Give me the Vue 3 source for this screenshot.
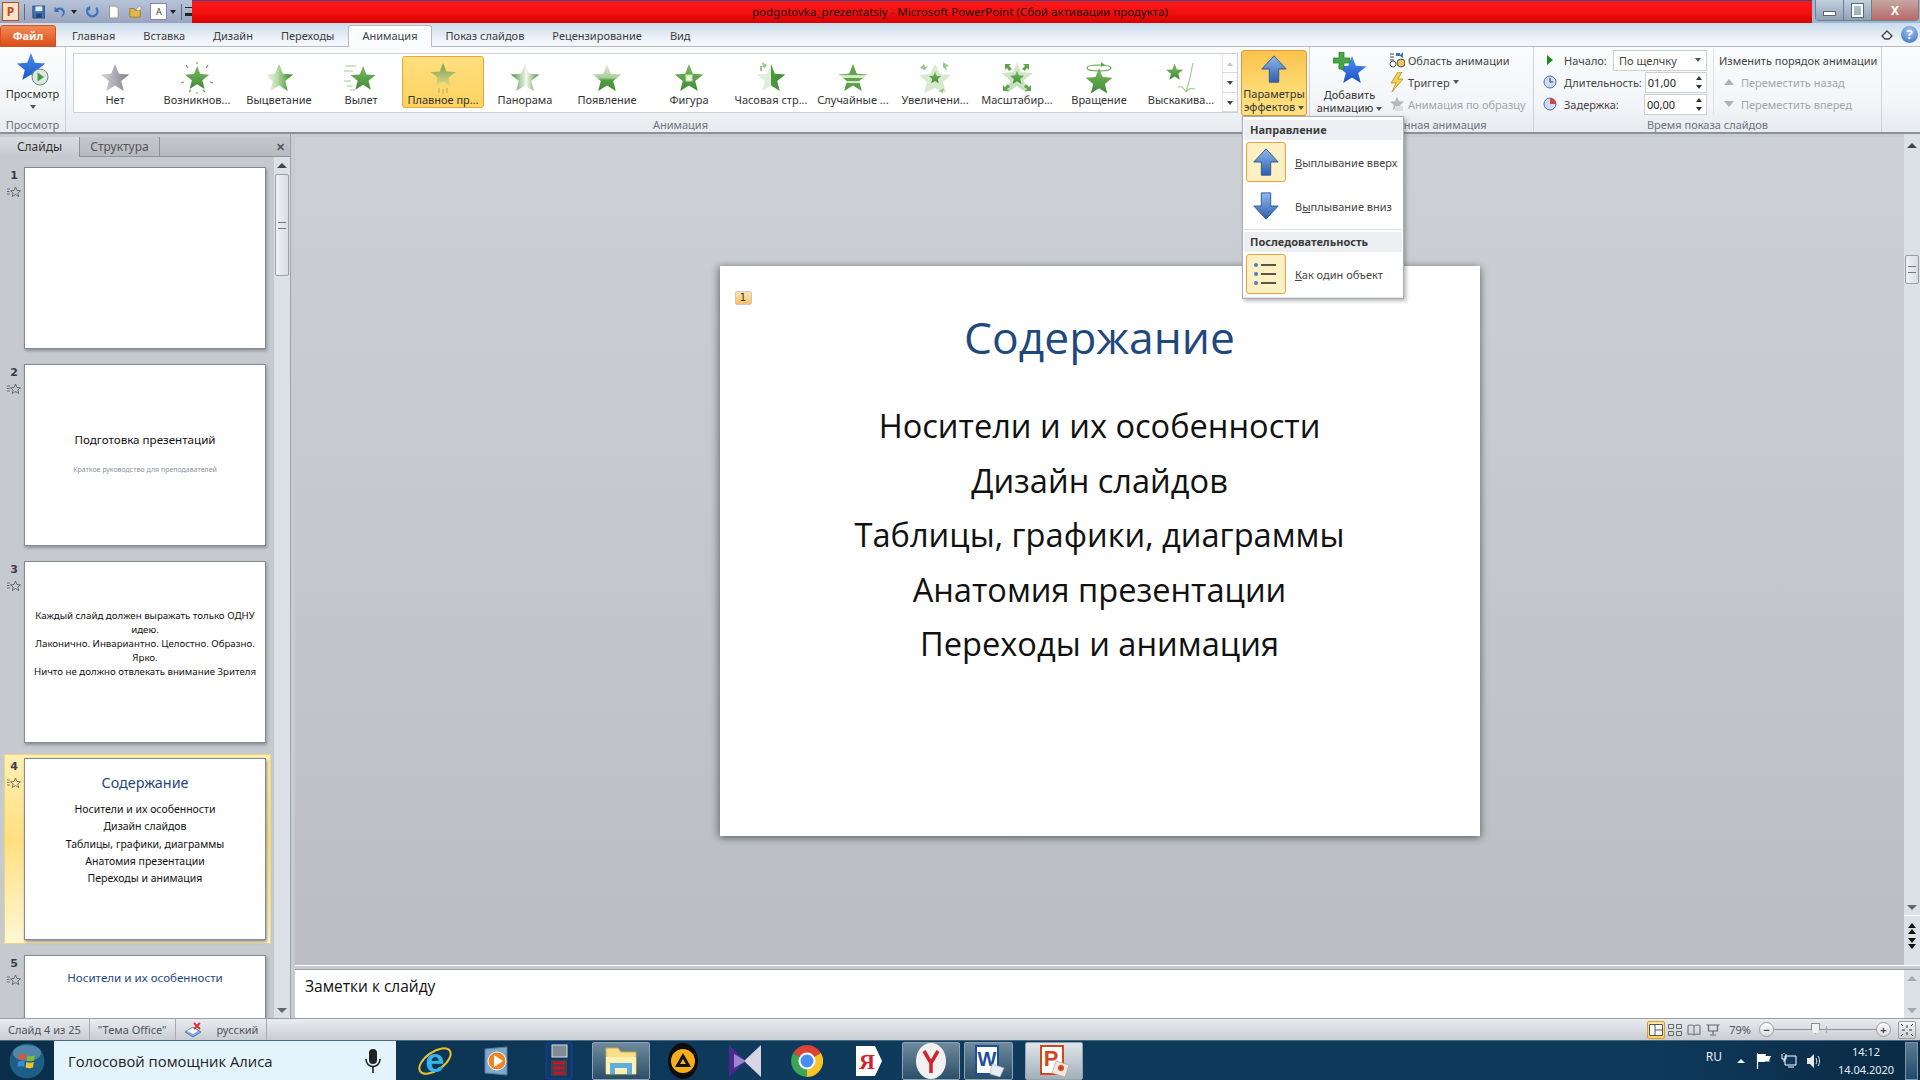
<template>
  <div class="window">
    <svg class="defs" width="0" height="0">
      <defs>
        <linearGradient id="g-gray" x1="0" y1="0" x2="1" y2="0"><stop offset="0" stop-color="#d6d6da" /><stop offset="1" stop-color="#7f7f8c" /></linearGradient>
        <linearGradient id="g-green" x1="0" y1="0" x2="0" y2="1"><stop offset="0" stop-color="#7cbc63" /><stop offset="1" stop-color="#3f8a35" /></linearGradient>
        <linearGradient id="g-fade" x1="0" y1="0" x2="1" y2="0"><stop offset="0" stop-color="#fbfdf9" /><stop offset=".45" stop-color="#b5d8a6" /><stop offset=".8" stop-color="#58a346" /><stop offset="1" stop-color="#4c9440" /></linearGradient>
        <linearGradient id="g-float" x1="0" y1="0" x2="0" y2="1"><stop offset="0" stop-color="#70a050" /><stop offset="1" stop-color="#e6dc8a" /></linearGradient>
        <linearGradient id="g-pan" x1="0" y1="0" x2="1" y2="0"><stop offset="0" stop-color="#448f38" /><stop offset=".55" stop-color="#f4f8f0" /><stop offset="1" stop-color="#448f38" /></linearGradient>
        <linearGradient id="g-appear" x1="0" y1="0" x2="0" y2="1"><stop offset="0" stop-color="#e4f0dc" /><stop offset=".5" stop-color="#a9cf98" /><stop offset=".6" stop-color="#529c44" /><stop offset="1" stop-color="#3f8a35" /></linearGradient>
        <linearGradient id="g-clock" x1="0" y1="0" x2="1" y2="0"><stop offset="0" stop-color="#dfeeda" /><stop offset=".5" stop-color="#dfeeda" /><stop offset=".5" stop-color="#4e983f" /><stop offset="1" stop-color="#3f8a35" /></linearGradient>
        <linearGradient id="g-stripe" x1="0" y1="0" x2="0" y2="1"><stop offset="0" stop-color="#5da54b" /><stop offset=".4" stop-color="#5da54b" /><stop offset=".42" stop-color="#d3e8c9" /><stop offset=".5" stop-color="#d3e8c9" /><stop offset=".52" stop-color="#5da54b" /><stop offset=".62" stop-color="#5da54b" /><stop offset=".64" stop-color="#d3e8c9" /><stop offset=".7" stop-color="#d3e8c9" /><stop offset=".72" stop-color="#5da54b" /><stop offset="1" stop-color="#4b9540" /></linearGradient>
        <linearGradient id="g-pale" x1="0" y1="0" x2="0" y2="1"><stop offset="0" stop-color="#dcebd4" /><stop offset="1" stop-color="#c2dcb6" /></linearGradient>
        <linearGradient id="g-blue" x1="0" y1="0" x2="0" y2="1"><stop offset="0" stop-color="#8fb9ea" /><stop offset="1" stop-color="#2f5fae" /></linearGradient>
        <linearGradient id="g-star" x1="0" y1="0" x2="0" y2="1"><stop offset="0" stop-color="#4c8df0" /><stop offset="1" stop-color="#1b56c4" /></linearGradient>
        <path id="star" d="M16 1L19.8 10.7 30.3 11.4 22.2 18 24.8 28.1 16 22.5 7.2 28.1 9.8 18 1.7 11.4 12.2 10.7Z" />
        <path id="arrow-up" d="M16 2L29 16H21V30H11V16H3Z" />
        <path id="arrow-down" d="M16 30L29 16H21V2H11V16H3Z" />
        <g id="mini-star" fill="none" stroke="#555" stroke-width=".8">
          <path d="M8.5 1L10 4.5 13.5 4.8 10.8 7 11.8 10.5 8.5 8.6 5.2 10.5 6.2 7 3.5 4.8 7 4.5Z" />
          <path d="M0 3H3M0 5.5H2.5M0 8H3" />
        </g>
      </defs>
    </svg>

    <header class="titlebar">
      <div class="quick">
        <span class="app-logo">P</span>
        <span class="quick-sep"></span>
        <svg class="qa first" viewBox="0 0 16 16"><path d="M1 1H15V15H1Z" fill="#3f6fb5" stroke="#27477f" /><path d="M4 1.5H12V7H4Z" fill="#e8eef6" /><path d="M5 10H11V15H5Z" fill="#24406f" /></svg>
        <svg class="qa" viewBox="0 0 16 16"><path d="M3 2V8H9L6.8 5.8C9 4.5 12 5.6 12.6 8.2 13 10.500 11.800 12.500 10 14 13.500 13 15.500 10 14.800 7 13.800 3 9 1.300 5.300 3.800Z" fill="#3b73c4" /></svg>
        <span class="qa-drop"></span>
        <svg class="qa redo" viewBox="0 0 16 16"><path d="M13 3A6 6 0 1 1 4 3" fill="none" stroke="#3b73c4" stroke-width="2.600" /><path d="M6 0V6H1Z" fill="#3b73c4" /></svg>
        <svg class="qa" viewBox="0 0 16 16"><path d="M3 1H10L13 4V15H3Z" fill="#fdfdf8" stroke="#8a8a80" /></svg>
        <svg class="qa" viewBox="0 0 16 16"><path d="M1 4H6L7 6H13V14H1Z" fill="#e5b84e" stroke="#9a7420" /><path d="M8 5L12 1 15 3 11 7Z" fill="#f3f0dc" stroke="#777" stroke-width=".6" /></svg>
        <span class="qa-a">A</span>
        <span class="qa-drop"></span>
        <span class="quick-sep"></span>
        <span class="qa-more"></span>
      </div>
      <div class="title-red">podgotovka_prezentatsiy - Microsoft PowerPoint (Сбой активации продукта)</div>
      <div class="winbtns">
        <span class="winbtn"><i class="w-min"></i></span>
        <span class="winbtn"><i class="w-max"></i></span>
        <span class="winbtn close">X</span>
      </div>
    </header>

    <nav class="tabs">
      <span class="tab-file">Файл</span>
      <span
        v-for="t in tabs"
        :key="t"
        class="tab"
        :class="{ current: t === 'Анимация' }"
      >{{ t }}</span>
      <span class="tab-tools">
        <svg width="12" height="10" viewBox="0 0 12 10"><path d="M1 6L6 1 11 6 8 9H4Z" fill="none" stroke="#444" stroke-width="1.300" /></svg>
        <span class="help">?</span>
      </span>
    </nav>

    <section class="ribbon">
      <div class="group g-preview">
        <div class="group-body preview-btn">
          <svg width="36" height="36" viewBox="0 0 36 36"><use href="#star" fill="url(#g-star)" /><circle cx="25" cy="25" r="8" fill="#dfe7e4" stroke="#6f8b80" /><path d="M22.500 20.500L29 25 22.500 29.500Z" fill="#3ba33b" /></svg>
          <span>Просмотр</span>
          <i class="caret"></i>
        </div>
        <div class="group-label">Просмотр</div>
      </div>

      <div class="group g-anim">
        <div class="group-body anim-body">
          <div class="gallery">
            <div
              v-for="e in effects"
              :key="e.label"
              class="effect"
              :class="{ selected: e.selected }"
            >
              <svg width="34" height="32" viewBox="0 0 34 32">
                <path v-for="(x, i) in e.under || []" :key="'u' + i" :d="x.d" :fill="x.fill || 'none'" :stroke="x.stroke || 'none'" stroke-width="1.100" />
                <use href="#star" :fill="`url(#${e.fill})`" :transform="e.tf || 'translate(1 1)'" />
                <path v-for="(x, i) in e.extras || []" :key="i" :d="x.d" :fill="x.fill || 'none'" :stroke="x.stroke || 'none'" stroke-width="1.100" />
              </svg>
              <span>{{ e.label }}</span>
            </div>
            <div class="gallery-scroll">
              <i class="sc-up off"></i>
              <i class="sc-down"></i>
              <i class="sc-more"></i>
            </div>
          </div>
          <div class="effects-btn">
            <svg width="30" height="30" viewBox="0 0 32 32"><use href="#arrow-up" fill="url(#g-blue)" stroke="#2c5596" /></svg>
            <span>Параметры</span>
            <span>эффектов <i class="caret inline"></i></span>
          </div>
        </div>
        <div class="group-label anim-label">Анимация</div>
      </div>

      <div class="group g-adv">
        <div class="group-body adv-body">
          <div class="add-btn">
            <svg width="34" height="34" viewBox="0 0 34 34"><use href="#star" fill="url(#g-star)" transform="translate(3 3)" /><path d="M6 0H11V6H17V11H11V17H6V11H0V6H6Z" fill="#45a845" stroke="#2a7a2a" stroke-width=".7" /></svg>
            <span class="add-text">Добавить</span>
            <span>анимацию <i class="caret inline"></i></span>
          </div>
          <div class="rows">
            <div class="row">
              <svg width="16" height="16" viewBox="0 0 16 16"><path d="M1 2H5M1 5H5M1 8H5" stroke="#444" /><path d="M7 1H11V3L14 0V6L11 4H7Z" fill="#3b73c4" /><circle cx="12" cy="11" r="4" fill="#e6c75c" stroke="#555" /><circle cx="4" cy="12" r="3" fill="#fff" stroke="#555" /></svg>
              Область анимации
            </div>
            <div class="row">
              <svg width="16" height="20" viewBox="0 0 16 20"><path d="M9 0L2 11H7L3 20 14 7H9L13 0Z" fill="#f2d14a" stroke="#a68413" stroke-width=".7" /></svg>
              Триггер <i class="caret inline"></i>
            </div>
            <div class="row off">
              <svg width="16" height="18" viewBox="0 0 32 32"><use href="#star" fill="#b4b7bb" /><path d="M12 20H28V30H12Z" fill="#dcdee0" /></svg>
              Анимация по образцу
            </div>
          </div>
        </div>
        <div class="group-label">Расширенная анимация</div>
      </div>

      <div class="group g-time">
        <div class="group-body time-body">
          <div class="time-col">
            <div class="row">
              <svg class="time-ico" width="14" height="14" viewBox="0 0 14 14"><path d="M4 2L10 7 4 12Z" fill="#1b8a1b" /></svg>
              <span class="time-label">Начало:</span>
              <span class="select">По щелчку<i class="caret"></i></span>
            </div>
            <div class="row">
              <svg class="time-ico" width="14" height="14" viewBox="0 0 14 14"><circle cx="7" cy="7" r="6" fill="#cfdcf0" stroke="#4a6ea8" /><path d="M7 3V7H10" fill="none" stroke="#333" /></svg>
              <span class="time-label">Длительность:</span>
              <span class="spin">01,00<b><i></i><i></i></b></span>
            </div>
            <div class="row">
              <svg class="time-ico" width="14" height="14" viewBox="0 0 14 14"><circle cx="7" cy="7" r="6" fill="#cfdcf0" stroke="#4a6ea8" /><path d="M7 7V1A6 6 0 0 1 13 7Z" fill="#d8453f" /></svg>
              <span class="time-label">Задержка:</span>
              <span class="spin">00,00<b><i></i><i></i></b></span>
            </div>
          </div>
          <div class="order-col">
            <div class="row">Изменить порядок анимации</div>
            <div class="row off move"><i class="tri-up"></i>Переместить назад</div>
            <div class="row off move"><i class="tri-down"></i>Переместить вперед</div>
          </div>
        </div>
        <div class="group-label">Время показа слайдов</div>
      </div>
    </section>

    <main class="workspace">
      <aside class="panel">
        <div class="panel-tabs">
          <span class="ptab current">Слайды</span>
          <span class="ptab">Структура</span>
          <span class="pclose">✕</span>
        </div>
        <div class="panel-main">
          <div class="thumbs">
            <div
              v-for="s in slides"
              :key="s.n"
              class="thumb-row"
              :class="{ active: s.n === 4 }"
            >
              <div class="thumb-side">
                <b>{{ s.n }}</b>
                <svg width="14" height="11" viewBox="0 0 14 11"><use href="#mini-star" /></svg>
              </div>
              <div class="thumb" :class="s.kind">
                <div v-if="s.title" class="thumb-title">{{ s.title }}</div>
                <div v-if="s.sub" class="thumb-sub">{{ s.sub }}</div>
                <div v-for="l in s.lines" :key="l" class="thumb-line">{{ l }}</div>
              </div>
            </div>
          </div>
          <div class="vscroll">
            <i class="sc-tri up"></i>
            <span class="vthumb tall"><u></u></span>
            <span class="spacer"></span>
            <i class="sc-tri down"></i>
          </div>
        </div>
      </aside>

      <div class="editor">
        <div class="editor-top">
          <div class="canvas">
            <article class="slide">
              <span class="badge">1</span>
              <h1>Содержание</h1>
              <p v-for="l in contents" :key="l">{{ l }}</p>
            </article>
          </div>
          <div class="vscroll main-scroll">
            <i class="sc-tri up"></i>
            <span class="vthumb small"><u></u></span>
            <span class="spacer"></span>
            <i class="sc-tri down"></i>
            <div class="pager">
              <span class="dbl"><i></i><i></i></span>
              <span class="dbl rev"><i></i><i></i></span>
            </div>
          </div>
        </div>
        <div class="notes">
          <div class="notes-text">Заметки к слайду</div>
          <div class="notes-scroll">
            <i class="sc-tri up pale"></i>
            <i class="sc-tri down pale"></i>
          </div>
        </div>
      </div>
    </main>

    <footer class="status">
      <span class="st">Слайд 4 из 25</span>
      <span class="st">"Тема Office"</span>
      <span class="st lang">
        <svg width="18" height="16" viewBox="0 0 18 16"><path d="M1 10L9 5 17 10 9 15Z" fill="#7fa6dd" stroke="#35609f" stroke-width=".7" /><path d="M3 9L9 5.500 14 9 9 12Z" fill="#f6f6f2" /><path d="M10 1L16 7M16 1L10 7" stroke="#d8302a" stroke-width="1.800" /></svg>
        <span>русский</span>
      </span>
      <span class="st-spacer"></span>
      <span class="view active">
        <svg width="14" height="12" viewBox="0 0 14 12"><path d="M.5.5H13.500V11.500H.5ZM6 .5V11.500M6 6H13.500" fill="#fff" stroke="#555" /></svg>
      </span>
      <span class="view">
        <svg width="14" height="12" viewBox="0 0 14 12"><path d="M.5.5H5.500V4.500H.5ZM8.500.5H13.500V4.500H8.500ZM.5 7.500H5.500V11.500H.5ZM8.500 7.500H13.500V11.500H8.500Z" fill="none" stroke="#666" /></svg>
      </span>
      <span class="view">
        <svg width="14" height="12" viewBox="0 0 14 12"><path d="M7 2C5 .8 3 .8 1 1.500V10.500C3 9.800 5 9.800 7 11 9 9.800 11 9.800 13 10.500V1.500C11 .8 9 .8 7 2ZM7 2V11" fill="none" stroke="#666" /></svg>
      </span>
      <span class="view">
        <svg width="14" height="12" viewBox="0 0 14 12"><path d="M.5 1H13.500M2.500 1V7H11.500V1M7 7V10M4 11H10" fill="none" stroke="#666" stroke-width="1.200" /></svg>
      </span>
      <span class="zoom-val">79%</span>
      <span class="zoom-btn">−</span>
      <span class="slider"><i class="tick"></i><i class="knob"></i></span>
      <span class="zoom-btn">+</span>
      <span class="fit">
        <svg width="16" height="16" viewBox="0 0 16 16"><path d="M8 3V6M8 10V13M3 8H6M10 8H13M2 2L4 4M14 2L12 4M2 14L4 12M14 14L12 12" stroke="#333" /></svg>
      </span>
    </footer>

    <div class="taskbar">
      <div class="start">
        <svg width="38" height="38" viewBox="0 0 38 38">
          <circle cx="19" cy="19" r="18" fill="#1e5d86" stroke="#0b2c42" />
          <ellipse cx="19" cy="11" rx="14" ry="8" fill="#7fb2cc" opacity=".5" />
          <path d="M11 13C13 11.500 15.500 12 18 13L17 18C15 17 13 17 10.500 18Z" fill="#e6502c" />
          <path d="M19.500 13.500C22 14.500 24.500 14.500 27 13L26 18.500C24 19.500 21 19.500 18.800 18.500Z" fill="#7ebc3c" />
          <path d="M10.300 19.500C13 18.500 15 18.500 16.800 19.500L16 25C14 24 12 24 9.500 25Z" fill="#2f8fd8" />
          <path d="M18.300 20C21 21 23.500 21 25.800 20L25 25.500C23 26.500 20 26.500 17.500 25.500Z" fill="#f4c22c" />
        </svg>
      </div>
      <div class="alice">
        <span>Голосовой помощник Алиса</span>
        <svg width="16" height="24" viewBox="0 0 16 24"><rect x="4" y="0" width="8" height="15" rx="4" fill="#222" /><path d="M1 10C1 20 15 20 15 10" fill="none" stroke="#222" stroke-width="1.600" /><path d="M8 18V24" stroke="#222" stroke-width="1.600" /></svg>
      </div>
      <div class="apps">
        <span class="task">
          <svg width="40" height="38" viewBox="0 0 40 38"><ellipse cx="20" cy="19" rx="18" ry="9" transform="rotate(-35 20 19)" fill="none" stroke="#e9c02f" stroke-width="2" /><text x="20" y="30" text-anchor="middle" class="logo-e">e</text></svg>
        </span>
        <span class="task">
          <svg width="30" height="32" viewBox="0 0 30 32"><path d="M3 4L25 2V30L3 28Z" fill="#7fa9c8" stroke="#517b9b" /><circle cx="15" cy="16" r="9" fill="#f08324" stroke="#fff" /><path d="M12 10L21 16 12 22Z" fill="#fff" /></svg>
        </span>
        <span class="task">
          <svg width="28" height="38" viewBox="0 0 28 38"><rect x="1" y="1" width="26" height="36" rx="2" fill="#123a5c" stroke="#1b3fb0" /><rect x="7" y="3" width="15" height="12" fill="#7d8b96" stroke="#ddd" /><rect x="6" y="18" width="16" height="16" fill="#39464f" /><path d="M8 21H20M8 26H20M8 31H20" stroke="#c2162a" stroke-width="3" /></svg>
        </span>
        <span class="task tile">
          <svg width="36" height="36" viewBox="0 0 36 36"><path d="M3 5H15L18 9H33V31H3Z" fill="#f6df88" stroke="#c8a84a" /><path d="M3 14H33V31H3Z" fill="#fdf0b4" /><path d="M7 31V20H29V31H24V25H12V31Z" fill="#5faee0" /></svg>
        </span>
        <span class="task">
          <svg width="32" height="38" viewBox="0 0 32 38"><ellipse cx="16" cy="19" rx="15" ry="18" fill="#0d0d0d" /><circle cx="16" cy="19" r="12" fill="#f6ae1c" /><path d="M16 11L24 25H8Z" fill="#111" /><path d="M16 17L19 22H13Z" fill="#f6ae1c" /></svg>
        </span>
        <span class="task">
          <svg width="34" height="38" viewBox="0 0 34 38"><path d="M1 3L18 19 1 35Z" fill="#4a2a8f" /><path d="M33 3L16 19 33 35Z" fill="#d8d4e4" /><path d="M6 12L18 19 6 26Z" fill="#9b86d2" /></svg>
        </span>
        <span class="task">
          <svg width="32" height="32" viewBox="0 0 32 32"><path d="M16 16L2.200 8A16 16 0 0 1 29.900 8Z" fill="#dd4437" /><path d="M16 16L29.900 8A16 16 0 0 1 16 32Z" fill="#f7c325" /><path d="M16 16L16 32A16 16 0 0 1 2.200 8Z" fill="#3aa655" /><circle cx="16" cy="16" r="7.500" fill="#4a8df0" stroke="#fff" stroke-width="2" /></svg>
        </span>
        <span class="task">
          <svg width="30" height="32" viewBox="0 0 30 32"><path d="M2 1H21L28 16 21 31H2Z" fill="#fff" /><text x="13" y="24" text-anchor="middle" class="logo-ya">Я</text></svg>
        </span>
        <span class="task tile">
          <svg width="32" height="38" viewBox="0 0 32 38"><ellipse cx="16" cy="19" rx="15" ry="18" fill="#f1f1f1" /><path d="M9 9L16 21 23 9M16 21V31" fill="none" stroke="#d2222d" stroke-width="3.500" /></svg>
        </span>
        <span class="task tile word">
          <svg width="34" height="34" viewBox="0 0 34 34"><path d="M4 2H26V30H4Z" fill="#fff" stroke="#1e4f9c" stroke-width="2" /><text x="15" y="22" text-anchor="middle" class="logo-w">W</text><path d="M20 20L32 24 28 33 18 30Z" fill="#e7ecf2" stroke="#aab" stroke-width=".6" /></svg>
        </span>
        <span class="task tile light">
          <svg width="34" height="34" viewBox="0 0 34 34"><path d="M4 2H26V30H4Z" fill="#fff" stroke="#d2481e" stroke-width="2" /><text x="14" y="22" text-anchor="middle" class="logo-p">P</text><path d="M19 17L32 21 28 33 15 29Z" fill="#f2e7e0" stroke="#b98" stroke-width=".6" /><circle cx="24" cy="24" r="3" fill="#d2481e" /></svg>
        </span>
      </div>
      <div class="tray">
        <span class="tray-lang">RU</span>
        <i class="tray-up"></i>
        <svg width="16" height="16" viewBox="0 0 16 16"><path d="M1.500 0V16" stroke="#fff" stroke-width="1.200" /><path d="M2 1H10L9.500 3H15L13 8 15 8.500H9L8.500 9H2Z" fill="#fff" /></svg>
        <svg width="16" height="16" viewBox="0 0 16 16"><path d="M4 3H15V12H4Z" fill="#0d3a5c" stroke="#fff" /><path d="M1 1V6H5V1M3 0V1M3 6V9M7 14H13" stroke="#fff" fill="none" /></svg>
        <svg width="16" height="16" viewBox="0 0 16 16"><path d="M1 5H4L8 1V15L4 11H1Z" fill="#e4e8ec" /><path d="M10 5C11 7 11 9 10 11M12 3C14 6 14 10 12 13" fill="none" stroke="#e4e8ec" /></svg>
        <div class="clock">
          <span>14:12</span>
          <span>14.04.2020</span>
        </div>
        <span class="show-desktop"></span>
      </div>
    </div>

    <div class="menu">
      <div class="menu-head">Направление</div>
      <div class="menu-item">
        <span class="menu-tile on"><svg width="30" height="32" viewBox="0 0 32 32"><use href="#arrow-up" fill="url(#g-blue)" stroke="#2c5596" /></svg></span>
        <span><u>В</u>ыплывание вверх</span>
      </div>
      <div class="menu-item">
        <span class="menu-tile"><svg width="30" height="32" viewBox="0 0 32 32"><use href="#arrow-down" fill="url(#g-blue)" stroke="#2c5596" /></svg></span>
        <span>В<u>ы</u>плывание вниз</span>
      </div>
      <div class="menu-line"></div>
      <div class="menu-head">Последовательность</div>
      <div class="menu-item">
        <span class="menu-tile on"><svg width="28" height="24" viewBox="0 0 28 24"><path d="M9 3H24M9 12H24M9 21H24" stroke="#222" stroke-width="1.300" /><circle cx="4" cy="3" r="2" fill="#4a7cc4" /><circle cx="4" cy="12" r="2" fill="#4a7cc4" /><circle cx="4" cy="21" r="2" fill="#4a7cc4" /></svg></span>
        <span><u>К</u>ак один объект</span>
      </div>
      <div class="menu-line last"></div>
    </div>
  </div>
</template>

<script setup>
const tabs = ['Главная', 'Вставка', 'Дизайн', 'Переходы', 'Анимация', 'Показ слайдов', 'Рецензирование', 'Вид']

const G = '#5da54b'
const P = '#9cc98b'

const effects = [
  { label: 'Нет', fill: 'g-gray' },
  {
    label: 'Возникнов...',
    fill: 'g-green',
    tf: 'translate(3.500 3) scale(.85)',
    extras: [{ d: 'M17 0V2M6 3L8 6M28 3L26 6M1 21L4 20M33 21L30 20M9 30L11 28M25 30L23 28M17 30V32', stroke: G }]
  },
  { label: 'Выцветание', fill: 'g-fade' },
  {
    label: 'Вылет',
    fill: 'g-green',
    tf: 'translate(5 3) scale(.88)',
    extras: [{ d: 'M1 4H12M0 9H9M0 19H7M3 24H9M6 28H11', stroke: P }]
  },
  {
    label: 'Плавное пр...',
    fill: 'g-float',
    selected: true,
    tf: 'translate(3 0) scale(.88)',
    extras: [{ d: 'M13 26V31M17 27V32M21 26V31', stroke: '#b8ae62' }]
  },
  { label: 'Панорама', fill: 'g-pan' },
  { label: 'Появление', fill: 'g-appear' },
  {
    label: 'Фигура',
    fill: 'g-green',
    extras: [{ d: 'M14 13H20V19H14Z', fill: '#e8f4e0', stroke: '#bfe0b0' }]
  },
  {
    label: 'Часовая стр...',
    fill: 'g-clock',
    extras: [{ d: 'M6 9L6 4 9 4 8 0 13 3 10 7 10 5 8 5 8 9Z', fill: P }]
  },
  { label: 'Случайные ...', fill: 'g-stripe' },
  {
    label: 'Увеличени...',
    fill: 'g-green',
    tf: 'translate(10 9) scale(.44)',
    under: [
      { d: 'M17 2L22 12 33 13 25 20 28 31 17 26 6 31 9 20 1 13 12 12Z', fill: '#d8e9cf' },
      { d: 'M2 6L6 2 7 5 10 4 7 8ZM25 0L31 4 28 5 29 9 25 5ZM20 29L26 26 25 31Z', fill: P }
    ]
  },
  {
    label: 'Масштабир...',
    fill: 'g-green',
    tf: 'translate(9 8) scale(.5)',
    under: [
      { d: 'M17 0L21 10 33 11 24 18 27 31 17 24 7 31 10 18 1 11 13 10Z', fill: 'url(#g-pale)' },
      { d: 'M5 2H11L9 4 12 7 9 9 7 6 5 8ZM29 2H23L25 4 22 7 25 9 27 6 29 8ZM3 29V23L5 25 8 22 10 25 7 27 9 29ZM31 29V23L29 25 26 22 24 25 27 27 25 29Z', fill: G }
    ]
  },
  {
    label: 'Вращение',
    fill: 'g-green',
    tf: 'translate(2 5) scale(.94)',
    extras: [{ d: 'M5 6C5 2 29 2 29 6C29 10 5 10 5 6Z', stroke: G }, { d: 'M19 0L23 3 19 5Z', fill: G }]
  },
  {
    label: 'Выскакива...',
    fill: 'g-green',
    tf: 'translate(1 1) scale(.6)',
    extras: [{ d: 'M29 1C27 10 26 18 22 30M22 30C20 26 17 24 14 25M22 30C25 26 27 26 31 27', stroke: P }]
  }
]

const slides = [
  { n: 1, kind: 'blank' },
  { n: 2, kind: 'intro', title: 'Подготовка презентаций', sub: 'Краткое руководство для преподавателей' },
  {
    n: 3,
    kind: 'text',
    lines: [
      'Каждый слайд должен выражать только ОДНУ',
      'идею.',
      'Лаконично. Инвариантно. Целостно. Образно.',
      'Ярко.',
      'Ничто не должно отвлекать внимание Зрителя'
    ]
  },
  {
    n: 4,
    kind: 'toc',
    title: 'Содержание',
    lines: ['Носители и их особенности', 'Дизайн слайдов', 'Таблицы, графики, диаграммы', 'Анатомия презентации', 'Переходы и анимация']
  },
  { n: 5, kind: 'next', title: 'Носители и их особенности' }
]

const contents = slides[3].lines
</script>

<style>
html,
body {
  margin: 0;
  background: #bcbfc4;
}
</style>

<style scoped>
.window {
  position: relative;
  width: 1920px;
  height: 1080px;
  overflow: hidden;
  display: flex;
  flex-direction: column;
  font-family: "Noto Sans", "Liberation Sans", sans-serif;
  font-size: 11px;
  color: #3b3b3b;
}
.defs {
  position: absolute;
}

/* title bar */
.titlebar {
  height: 23px;
  display: flex;
  background: linear-gradient(90deg, #8aa4c2, #b9c6da 8%, #9fb6cf);
  flex: none;
}
.quick {
  width: 192px;
  flex: none;
  display: flex;
  align-items: center;
  background: linear-gradient(#b6c4d8, #9aa4be);
}
.app-logo {
  width: 15px;
  height: 17px;
  margin-left: 2px;
  background: #f6e3c8;
  border: 1px solid #c4481c;
  color: #c4481c;
  font-weight: 700;
  font-size: 12px;
  line-height: 17px;
  text-align: center;
}
.quick-sep {
  width: 1px;
  height: 16px;
  margin: 0 5px;
  background: #5c6b80;
}
.qa {
  width: 14px;
  height: 14px;
  margin-right: 8px;
}
.qa.first {
  margin-left: 2px;
  margin-right: 7px;
}
.qa.redo {
  margin-left: 8px;
}
.qa-drop {
  width: 0;
  height: 0;
  margin-left: -3px;
  border: 3px solid transparent;
  border-top: 4px solid #222;
  border-bottom: 0;
}
.qa-a {
  width: 15px;
  height: 15px;
  background: #fff;
  border: 1px solid #8a7fc4;
  font-size: 9px;
  line-height: 15px;
  text-align: center;
  margin-right: 6px;
}
.qa-more {
  width: 7px;
  height: 5px;
  margin-left: -2px;
  border-top: 1px solid #222;
  border-bottom: 3px solid #222;
}
.title-red {
  width: 1620px;
  flex: none;
  padding-right: 84px;
  background: linear-gradient(#ff1a1a, #f01010 55%, #d80000);
  border-top: 1px solid #3a4a8a;
  box-sizing: border-box;
  color: #1d1010;
  font-size: 11.500px;
  line-height: 21px;
  text-align: center;
}
.winbtns {
  margin-left: 3px;
  display: flex;
  height: 20px;
  border: 1px solid #6f7f92;
  border-top: 0;
  border-radius: 0 0 4px 4px;
}
.winbtn {
  width: 27px;
  height: 20px;
  display: flex;
  align-items: center;
  justify-content: center;
  background: linear-gradient(#c3d0de, #90a2b6);
  border-right: 1px solid #6f7f92;
}
.winbtn.close {
  width: 46px;
  border-right: 0;
  color: #fff;
  font-weight: 700;
  font-size: 12px;
  background: linear-gradient(#c6a7a4, #b86a66);
}
.w-min {
  width: 11px;
  height: 3px;
  margin-top: 6px;
  background: #fff;
  border: 1px solid #55657a;
}
.w-max {
  width: 7px;
  height: 9px;
  background: transparent;
  border: 2px solid #fff;
  outline: 1px solid #55657a;
}

/* tabs */
.tabs {
  height: 24px;
  flex: none;
  display: flex;
  align-items: flex-end;
  background: linear-gradient(#c9dbec, #eef3f8 70%, #f5f7fa);
  border-bottom: 1px solid #b6babf;
  box-sizing: border-box;
}
.tab-file {
  width: 56px;
  height: 22px;
  margin-bottom: -1px;
  background: linear-gradient(#f28a54, #dc4d1c);
  border-radius: 3px 3px 0 0;
  border: 1px solid #d0521f;
  box-sizing: border-box;
  color: #fff;
  font-weight: 700;
  line-height: 20px;
  text-align: center;
}
.tab {
  height: 22px;
  padding: 0 13px;
  line-height: 20px;
  margin-bottom: -1px;
  border: 1px solid transparent;
  border-bottom: 0;
  box-sizing: border-box;
}
.tab:nth-child(2) {
  padding-left: 15px;
}
.tab.current {
  background: #fbfcfd;
  border-color: #b6babf;
  border-radius: 3px 3px 0 0;
  color: #444;
}
.tab-tools {
  margin-left: auto;
  display: flex;
  align-items: center;
  gap: 8px;
  padding: 0 2px 3px 0;
}
.help {
  width: 17px;
  height: 17px;
  border-radius: 50%;
  background: radial-gradient(circle at 50% 30%, #a5c8ee, #2f6bc2);
  color: #fff;
  font-weight: 700;
  font-size: 13px;
  line-height: 17px;
  text-align: center;
}

/* ribbon */
.ribbon {
  height: 87px;
  flex: none;
  display: flex;
  background: linear-gradient(#fbfcfd, #f2f4f7 70%, #e7eaee);
  border-bottom: 2px solid #8d9096;
  box-sizing: border-box;
}
.group {
  display: flex;
  flex-direction: column;
  border-right: 1px solid #cfd3d8;
  box-sizing: border-box;
}
.group-body {
  height: 71px;
  flex: none;
}
.group-label {
  text-align: center;
  color: #6b7380;
  line-height: 14px;
}
.anim-label {
  padding-right: 14px;
}
.g-preview {
  width: 66px;
}
.preview-btn {
  display: flex;
  flex-direction: column;
  align-items: center;
  padding-top: 5px;
  box-sizing: border-box;
}
.preview-btn svg {
  margin-bottom: -2px;
}
.preview-btn span {
  margin-top: 0;
  color: #333;
}
.caret {
  display: inline-block;
  width: 0;
  height: 0;
  border: 3px solid transparent;
  border-top: 4px solid #555;
  border-bottom: 0;
}
.preview-btn .caret {
  margin-top: 4px;
}
.caret.inline {
  vertical-align: middle;
}
.g-anim {
  width: 1244px;
}
.anim-body {
  display: flex;
  padding-left: 7px;
}
.gallery {
  width: 1165px;
  height: 60px;
  margin-top: 6px;
  display: flex;
  background: #fff;
  border: 1px solid #cdd1d6;
  box-sizing: border-box;
}
.effect {
  width: 82px;
  flex: none;
  display: flex;
  flex-direction: column;
  align-items: center;
  padding-top: 6px;
  margin-top: 2px;
  height: 52px;
  box-sizing: border-box;
  color: #333;
}
.effect svg {
  margin-bottom: 0;
}
.effect span {
  line-height: 12px;
  white-space: nowrap;
}
.effect.selected {
  background: linear-gradient(#ffdf7e, #fdd361);
  border: 1px solid #e2a93a;
  border-radius: 3px;
  padding-top: 5px;
}
.gallery-scroll {
  flex: 1;
  display: flex;
  flex-direction: column;
  border-left: 1px solid #e3e5e8;
  background: #fdfdfe;
}
.gallery-scroll i {
  flex: 1;
  position: relative;
  border-bottom: 1px solid #d9dce0;
}
.gallery-scroll i::after {
  content: "";
  position: absolute;
  left: 4px;
  top: 8px;
  border: 3px solid transparent;
}
.sc-up::after {
  border-bottom: 4px solid #c4c6ca !important;
  border-top: 0 !important;
}
.sc-down::after,
.sc-more::after {
  border-top: 4px solid #444 !important;
  border-bottom: 0 !important;
}
.effects-btn {
  width: 66px;
  height: 66px;
  margin: 3px 0 0 3px;
  display: flex;
  flex-direction: column;
  align-items: center;
  padding-top: 3px;
  background: linear-gradient(#fbc24e, #fdd96f 55%, #ffe184);
  border: 1px solid #d99c32;
  border-radius: 3px;
  box-sizing: border-box;
  line-height: 13px;
  color: #333;
}
.effects-btn svg {
  margin-bottom: 3px;
}
.g-adv {
  width: 224px;
}
.adv-body {
  display: flex;
}
.add-btn {
  width: 79px;
  flex: none;
  display: flex;
  flex-direction: column;
  align-items: center;
  padding-top: 5px;
  box-sizing: border-box;
  line-height: 13px;
  color: #333;
}
.add-text {
  margin-top: 2px;
}
.rows {
  padding-top: 2px;
}
.row {
  height: 22px;
  display: flex;
  align-items: center;
  gap: 3px;
  color: #444;
  white-space: nowrap;
}
.row svg {
  flex: none;
}
.row.off {
  color: #a2a6ab;
}
.g-time {
  width: 348px;
}
.time-body {
  display: flex;
  padding-top: 2px;
  box-sizing: border-box;
}
.time-col {
  width: 180px;
  flex: none;
  padding-left: 8px;
  box-sizing: border-box;
  border-right: 1px solid #dfe2e6;
  height: 66px;
}
.time-ico {
  margin: 0 4px 0 1px;
}
.time-label {
  flex: none;
}
.select {
  margin-left: auto;
  width: 94px;
  height: 21px;
  display: flex;
  align-items: center;
  justify-content: space-between;
  padding: 0 5px;
  background: #fff;
  border: 1px solid #ccd0d5;
  box-sizing: border-box;
  margin-right: 6px;
}
.spin {
  margin-left: auto;
  margin-right: 6px;
  width: 63px;
  height: 21px;
  display: flex;
  align-items: center;
  justify-content: space-between;
  padding-left: 2px;
  background: #fff;
  border: 1px solid #ccd0d5;
  box-sizing: border-box;
  color: #222;
}
.spin b {
  width: 14px;
  display: flex;
  flex-direction: column;
  align-items: center;
  gap: 5px;
}
.spin i:first-child {
  border: 3px solid transparent;
  border-bottom: 4px solid #333;
  border-top: 0;
}
.spin i:last-child {
  border: 3px solid transparent;
  border-top: 4px solid #333;
  border-bottom: 0;
}
.order-col {
  padding-left: 5px;
}
.move {
  padding-left: 5px;
  gap: 7px;
}
.tri-up,
.tri-down {
  width: 0;
  height: 0;
  border: 5px solid transparent;
}
.tri-up {
  border-bottom: 6px solid #aeb2b7;
  border-top: 0;
}
.tri-down {
  border-top: 6px solid #aeb2b7;
  border-bottom: 0;
}

/* workspace */
.workspace {
  height: 884px;
  flex: none;
  display: flex;
  background: #c8ccd1;
}
.panel {
  width: 290px;
  flex: none;
  display: flex;
  flex-direction: column;
  padding-top: 3px;
  border-right: 1px solid #9fa3a8;
  box-sizing: content-box;
}
.panel-tabs {
  height: 20px;
  flex: none;
  display: flex;
  background: linear-gradient(#c4c8cd, #b7bbc0);
  border-bottom: 1px solid #8f9398;
  box-sizing: border-box;
  position: relative;
}
.ptab {
  width: 80px;
  text-align: center;
  line-height: 19px;
  font-size: 12px;
  color: #555;
  border-right: 1px solid #8f9398;
  box-sizing: border-box;
}
.ptab.current {
  background: linear-gradient(#d8dce1, #c6cace);
  color: #333;
  height: 20px;
}
.pclose {
  position: absolute;
  right: 5px;
  top: 2px;
  font-size: 11px;
  font-weight: 700;
  color: #555;
}
.panel-main {
  flex: 1;
  display: flex;
  min-height: 0;
}
.thumbs {
  width: 274px;
  flex: none;
  overflow: hidden;
  padding-top: 6px;
  box-sizing: border-box;
  background: #c6cacf;
}
.thumb-row {
  width: 267px;
  height: 190px;
  margin: 0 0 7px 4px;
  display: flex;
  align-items: center;
  box-sizing: border-box;
}
.thumb-row.active {
  background: linear-gradient(#fff0b4, #ffdf80 45%, #fff8d6);
  box-shadow: inset 0 0 0 1px #f2d478;
  border-radius: 2px;
}
.thumb-side {
  width: 20px;
  height: 182px;
  display: flex;
  flex-direction: column;
  align-items: center;
  color: #3b3b50;
  font-size: 11px;
  gap: 4px;
  padding-top: 2px;
  box-sizing: border-box;
}
.thumb-side b {
  font-family: "DejaVu Sans", sans-serif;
}
.thumb {
  width: 242px;
  height: 182px;
  flex: none;
  background: #fff;
  border: 1px solid #85888d;
  box-shadow: 1px 2px 3px #8f9398;
  box-sizing: border-box;
  display: flex;
  flex-direction: column;
  align-items: center;
  color: #111;
  text-align: center;
}
.intro {
  padding-top: 67px;
}
.thumb-title {
  font-size: 11.600px;
}
.thumb-sub {
  margin-top: 18px;
  font-size: 7px;
  color: #8b93a0;
}
.text {
  padding-top: 47px;
}
.text .thumb-line {
  font-size: 9.700px;
  line-height: 14px;
}
.toc {
  padding-top: 14px;
}
.toc .thumb-title {
  font-size: 14.400px;
  color: #1f497d;
  margin-bottom: 8px;
  line-height: 20px;
}
.toc .thumb-line {
  font-size: 10.500px;
  line-height: 17.300px;
}
.next {
  padding-top: 14px;
}
.next .thumb-title {
  font-size: 11.600px;
  color: #1f497d;
}
.vscroll {
  width: 16px;
  flex: none;
  display: flex;
  flex-direction: column;
  align-items: center;
  background: #dce1e8;
  height: 100%;
}
.sc-tri {
  flex: none;
  width: 0;
  height: 0;
  border: 5px solid transparent;
}
.sc-tri.up {
  margin: 6px 0 6px;
  border-bottom: 5px solid #444;
  border-top: 0;
}
.sc-tri.down {
  margin: 3px 0 5px;
  border-top: 5px solid #666;
  border-bottom: 0;
}
.sc-tri.pale.up {
  border-bottom-color: #a5a9ae;
}
.sc-tri.pale.down {
  border-top-color: #a5a9ae;
}
.vthumb {
  width: 14px;
  display: flex;
  align-items: center;
  justify-content: center;
  background: linear-gradient(90deg, #eef1f5, #d9dde3);
  border: 1px solid #9a9ea3;
  box-sizing: border-box;
  border-radius: 2px;
}
.vthumb u {
  width: 8px;
  height: 5px;
  border-top: 1px solid #777;
  border-bottom: 1px solid #777;
  position: relative;
}
.vthumb.tall {
  height: 102px;
}
.vthumb.small {
  height: 29px;
  margin-top: 107px;
}
.spacer {
  flex: 1;
}
.editor {
  flex: 1;
  margin-left: 4px;
  display: flex;
  flex-direction: column;
  min-width: 0;
}
.editor-top {
  height: 832px;
  flex: none;
  display: flex;
  padding-top: 0;
  border-bottom: 1px solid #fff;
  box-sizing: border-box;
}
.canvas {
  flex: 1;
  margin-top: 3px;
  display: flex;
  align-items: center;
  justify-content: center;
  background: linear-gradient(#cdd1d6, #bbbdc2);
}
.slide {
  position: relative;
  width: 760px;
  height: 570px;
  padding-top: 43px;
  box-sizing: border-box;
  background: #fff;
  box-shadow: -2px 1px 8px rgba(60, 60, 60, 0.55), 2px 2px 6px rgba(60, 60, 60, 0.35);
  text-align: center;
  color: #111;
  font-family: "Open Sans", "Noto Sans", sans-serif;
}
.slide h1 {
  margin: 0 0 34px;
  font-size: 44.400px;
  line-height: 56px;
  font-weight: 400;
  color: #1f497d;
}
.slide p {
  margin: 0;
  font-size: 32.600px;
  line-height: 54.500px;
}
.badge {
  position: absolute;
  left: 15px;
  top: 25px;
  width: 17px;
  height: 14px;
  background: linear-gradient(#fde2ae, #fdbf62);
  border: 1px solid #c8c8c8;
  border-radius: 2px;
  box-sizing: border-box;
  font: 10px/12px "DejaVu Sans", sans-serif;
  color: #333;
}
.main-scroll {
  padding-top: 3px;
  box-sizing: border-box;
}
.main-scroll .sc-tri.up {
  margin: 6px 0 0;
}
.pager {
  width: 16px;
  height: 50px;
  flex: none;
  border-top: 1px solid #fff;
  display: flex;
  flex-direction: column;
  align-items: center;
  padding-top: 7px;
  gap: 4px;
  box-sizing: border-box;
}
.dbl {
  display: flex;
  flex-direction: column;
  gap: 1px;
}
.dbl i {
  width: 0;
  height: 0;
  border: 4px solid transparent;
  border-bottom: 5px solid #111;
  border-top: 0;
}
.dbl.rev i {
  border-bottom: 0;
  border-top: 5px solid #111;
}
.notes {
  flex: 1;
  margin-top: 3px;
  display: flex;
  background: #fff;
  border-top: 1px solid #9a9ea3;
  min-height: 0;
}
.notes-text {
  flex: 1;
  padding: 5px 10px;
  font-size: 15.500px;
  color: #111;
  font-family: "Open Sans", "Noto Sans", sans-serif;
}
.notes-scroll {
  width: 16px;
  display: flex;
  flex-direction: column;
  align-items: center;
  justify-content: space-between;
  background: #dce1e8;
}
.notes-scroll .sc-tri.up {
  margin: 6px 0 0;
}

/* status bar */
.status {
  height: 22px;
  flex: none;
  display: flex;
  align-items: center;
  background: linear-gradient(#e9ecf0, #c9ccd1);
  border-top: 1px solid #9a9ea3;
  box-sizing: border-box;
  color: #50555c;
}
.st {
  height: 100%;
  display: flex;
  align-items: center;
  padding: 0 8px;
  border-right: 1px solid #a9adb2;
  box-sizing: border-box;
  white-space: nowrap;
}
.lang {
  gap: 15px;
}
.st-spacer {
  flex: 1;
  align-self: stretch;
  margin-right: 0;
}
.view {
  width: 18px;
  height: 18px;
  margin-right: 1px;
  display: flex;
  align-items: center;
  justify-content: center;
}
.view.active {
  background: linear-gradient(#ffe69a, #fdd361);
  border: 1px solid #d99c32;
  border-radius: 2px;
  box-sizing: border-box;
}
.zoom-val {
  margin: 0 8px 0 6px;
}
.zoom-btn {
  width: 15px;
  height: 15px;
  border: 1px solid #9a9ea3;
  border-radius: 50%;
  background: linear-gradient(#fff, #d8dbe0);
  text-align: center;
  font-weight: 700;
  line-height: 14px;
  box-sizing: border-box;
  color: #444;
}
.slider {
  position: relative;
  width: 102px;
  height: 1px;
  background: #8f9398;
}
.knob {
  position: absolute;
  left: 37px;
  top: -6px;
  width: 9px;
  height: 11px;
  background: #f1f2f4;
  border: 1px solid #8a8e93;
  box-sizing: border-box;
  clip-path: polygon(0 0, 100% 0, 100% 65%, 50% 100%, 0 65%);
}
.tick {
  position: absolute;
  left: 52px;
  top: -3px;
  width: 1px;
  height: 7px;
  background: #a5a9ae;
}
.fit {
  margin: 0 4px 0 7px;
  width: 16px;
  height: 16px;
  background: linear-gradient(#f6f7f9, #c9ccd1);
  border: 1px solid #9a9ea3;
  border-radius: 2px;
  display: flex;
  box-sizing: content-box;
}

/* taskbar */
.taskbar {
  flex: 1;
  display: flex;
  align-items: center;
  background: linear-gradient(90deg, #0b2f4a, #0e3a5c 40%, #0e3a5c 85%, #0a2a44);
  border-top: 1px solid #4a6a82;
  box-sizing: border-box;
  color: #e6ecf1;
}
.start {
  width: 54px;
  flex: none;
  display: flex;
  justify-content: center;
}
.alice {
  width: 342px;
  height: 39px;
  flex: none;
  display: flex;
  align-items: center;
  justify-content: space-between;
  padding: 0 15px 0 14px;
  background: #e3f4fd;
  box-sizing: border-box;
  color: #222;
  font-family: "Open Sans", "Noto Sans", sans-serif;
  font-size: 14.800px;
}
.apps {
  display: flex;
  align-items: center;
  margin-left: 8px;
  height: 100%;
}
.task {
  width: 62px;
  height: 38px;
  flex: none;
  display: flex;
  align-items: center;
  justify-content: center;
  box-sizing: border-box;
}
.task.tile {
  width: 58px;
  margin: 0 2px;
  background: linear-gradient(#6f8a9c, #2a4f6a);
  border: 1px solid #8ea2b0;
  border-radius: 2px;
}
.task.word {
  width: 49px;
  margin-right: 10px;
}
.task.light {
  background: linear-gradient(#dfe5e9, #a2b0ba);
}
.logo-e {
  font: 700 34px "Liberation Sans", sans-serif;
  fill: #36b4ea;
}
.logo-ya {
  font: 700 22px "Liberation Serif", serif;
  fill: #d8202a;
}
.logo-w {
  font: 700 20px "Liberation Sans", sans-serif;
  fill: #1e4f9c;
}
.logo-p {
  font: 700 22px "Liberation Sans", sans-serif;
  fill: #d2481e;
}
.tray {
  margin-left: auto;
  display: flex;
  align-items: center;
  gap: 9px;
  height: 100%;
}
.tray-lang {
  font-size: 12px;
  margin: -8px 6px 0 0;
}
.tray-up {
  width: 0;
  height: 0;
  border: 4px solid transparent;
  border-bottom: 4px solid #eef2f5;
  border-top: 0;
  margin-right: 2px;
}
.clock {
  width: 64px;
  margin-left: 3px;
  display: flex;
  flex-direction: column;
  align-items: center;
  gap: 2px;
  font-size: 11px;
  line-height: 16px;
}
.show-desktop {
  width: 13px;
  height: 38px;
  margin: 0 2px 0 -2px;
  background: linear-gradient(#5c7c92, #1e4a6a);
  border: 1px solid #7a96a8;
  box-sizing: border-box;
}

/* effect options menu */
.menu {
  position: absolute;
  left: 1242px;
  top: 116px;
  width: 162px;
  height: 183px;
  padding: 3px 1px;
  background: #fff;
  border: 1px solid #a9adb2;
  box-sizing: border-box;
  box-shadow: 2px 2px 4px rgba(70, 70, 70, 0.4);
  color: #444;
}
.menu-head {
  height: 20px;
  padding-left: 6px;
  background: #eceef1;
  font-weight: 700;
  line-height: 20px;
  color: #3b3b3b;
}
.menu-item {
  height: 44px;
  display: flex;
  align-items: center;
  gap: 9px;
  padding-left: 2px;
}
.menu-tile {
  width: 40px;
  height: 40px;
  flex: none;
  display: flex;
  align-items: center;
  justify-content: center;
  box-sizing: border-box;
  border: 1px solid transparent;
  border-radius: 3px;
}
.menu-tile.on {
  background: #fdf0c2;
  border-color: #f0a040;
}
.menu-line {
  height: 1px;
  margin: 1px 0 2px;
  background: #dfe2e6;
}
.menu-line.last {
  margin: 1px 0 0;
}
</style>
